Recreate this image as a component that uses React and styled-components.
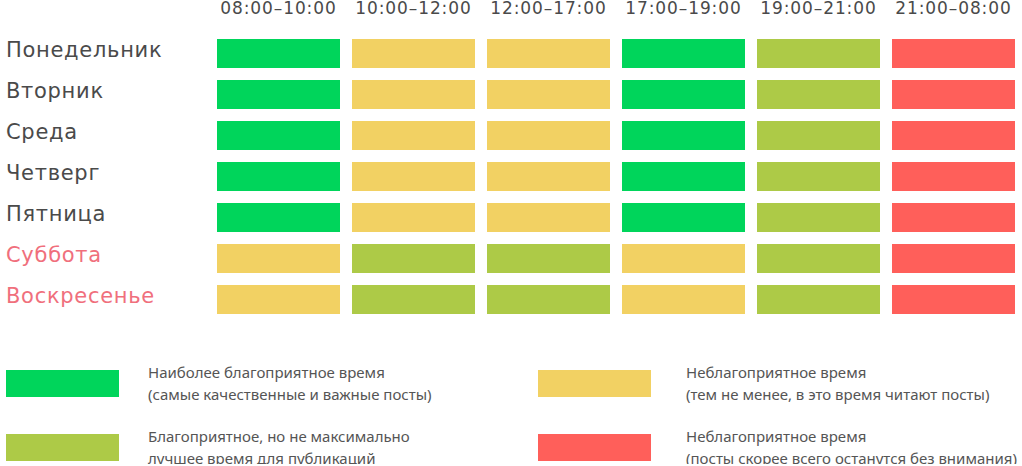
import React from "react";
import styled, { createGlobalStyle } from "styled-components";

const G = "#00d55b";
const Y = "#f2d163";
const L = "#adca47";
const R = "#ff5f5a";

const slots = ["08:00–10:00", "10:00–12:00", "12:00–17:00", "17:00–19:00", "19:00–21:00", "21:00–08:00"];

const days = [
  { name: "Понедельник", cells: [G, Y, Y, G, L, R] },
  { name: "Вторник", cells: [G, Y, Y, G, L, R] },
  { name: "Среда", cells: [G, Y, Y, G, L, R] },
  { name: "Четверг", cells: [G, Y, Y, G, L, R] },
  { name: "Пятница", cells: [G, Y, Y, G, L, R] },
  { name: "Суббота", weekend: true, cells: [Y, L, L, Y, L, R] },
  { name: "Воскресенье", weekend: true, cells: [Y, L, L, Y, L, R] },
];

const legend = [
  { color: G, gap: 29, lines: ["Наиболее благоприятное время", "(самые качественные и важные посты)"] },
  { color: Y, gap: 35, lines: ["Неблагоприятное время", "(тем не менее, в это время читают посты)"] },
  { color: L, gap: 29, lines: ["Благоприятное, но не максимально", "лучшее время для публикаций"] },
  { color: R, gap: 35, lines: ["Неблагоприятное время", "(посты скорее всего останутся без внимания)"] },
];

const GlobalStyle = createGlobalStyle`
  body {
    margin: 0;
    background: #fff;
    font-family: "Noto Sans", "Liberation Sans", sans-serif;
    overflow: hidden;
  }
`;

const Page = styled.div`
  width: 1022px;
  height: 466px;
  padding-left: 6px;
  box-sizing: border-box;
`;

const Table = styled.div`
  display: grid;
  grid-template-columns: 199px repeat(6, 123px);
  grid-auto-rows: 29px;
  column-gap: 12px;
  row-gap: 12px;
  margin-top: -2px;
`;

const HeadCell = styled.div`
  height: 28px;
  line-height: 20px;
  font-family: "DejaVu Sans", sans-serif;
  font-size: 17px;
  letter-spacing: 0.9px;
  color: #4a4a4a;
  text-align: center;
  white-space: nowrap;
  align-self: start;
  margin: 0 -10px;
`;

const DayLabel = styled.div`
  display: flex;
  align-items: center;
  padding-bottom: 8px;
  font-family: "DejaVu Sans", sans-serif;
  font-size: 21px;
  letter-spacing: 0.7px;
  color: ${(p) => (p.weekend ? "#f06f7c" : "#4a4a4a")};
  white-space: nowrap;
`;

const Cell = styled.div`
  background: ${(p) => p.color};
`;

const Legend = styled.div`
  display: grid;
  grid-template-columns: 532px 1fr;
  row-gap: 20px;
  margin-top: 47px;
`;

const LegendItem = styled.div`
  display: flex;
  align-items: center;
  gap: ${(p) => p.gap}px;
`;

const Swatch = styled.div`
  width: 113px;
  height: 27px;
  flex: none;
  background: ${(p) => p.color};
`;

const LegendText = styled.div`
  font-size: 15px;
  line-height: 22px;
  color: #555;
  white-space: nowrap;
`;

export default function App() {
  return (
    <>
      <GlobalStyle />
      <Page>
        <Table>
          <div />
          {slots.map((s) => (
            <HeadCell key={s}>{s}</HeadCell>
          ))}
          {days.map((d) => (
            <React.Fragment key={d.name}>
              <DayLabel weekend={d.weekend}>{d.name}</DayLabel>
              {d.cells.map((c, i) => (
                <Cell key={i} color={c} />
              ))}
            </React.Fragment>
          ))}
        </Table>
        <Legend>
          {legend.map((l, i) => (
            <LegendItem key={i} gap={l.gap}>
              <Swatch color={l.color} />
              <LegendText>
                {l.lines.map((t) => (
                  <div key={t}>{t}</div>
                ))}
              </LegendText>
            </LegendItem>
          ))}
        </Legend>
      </Page>
    </>
  );
}
